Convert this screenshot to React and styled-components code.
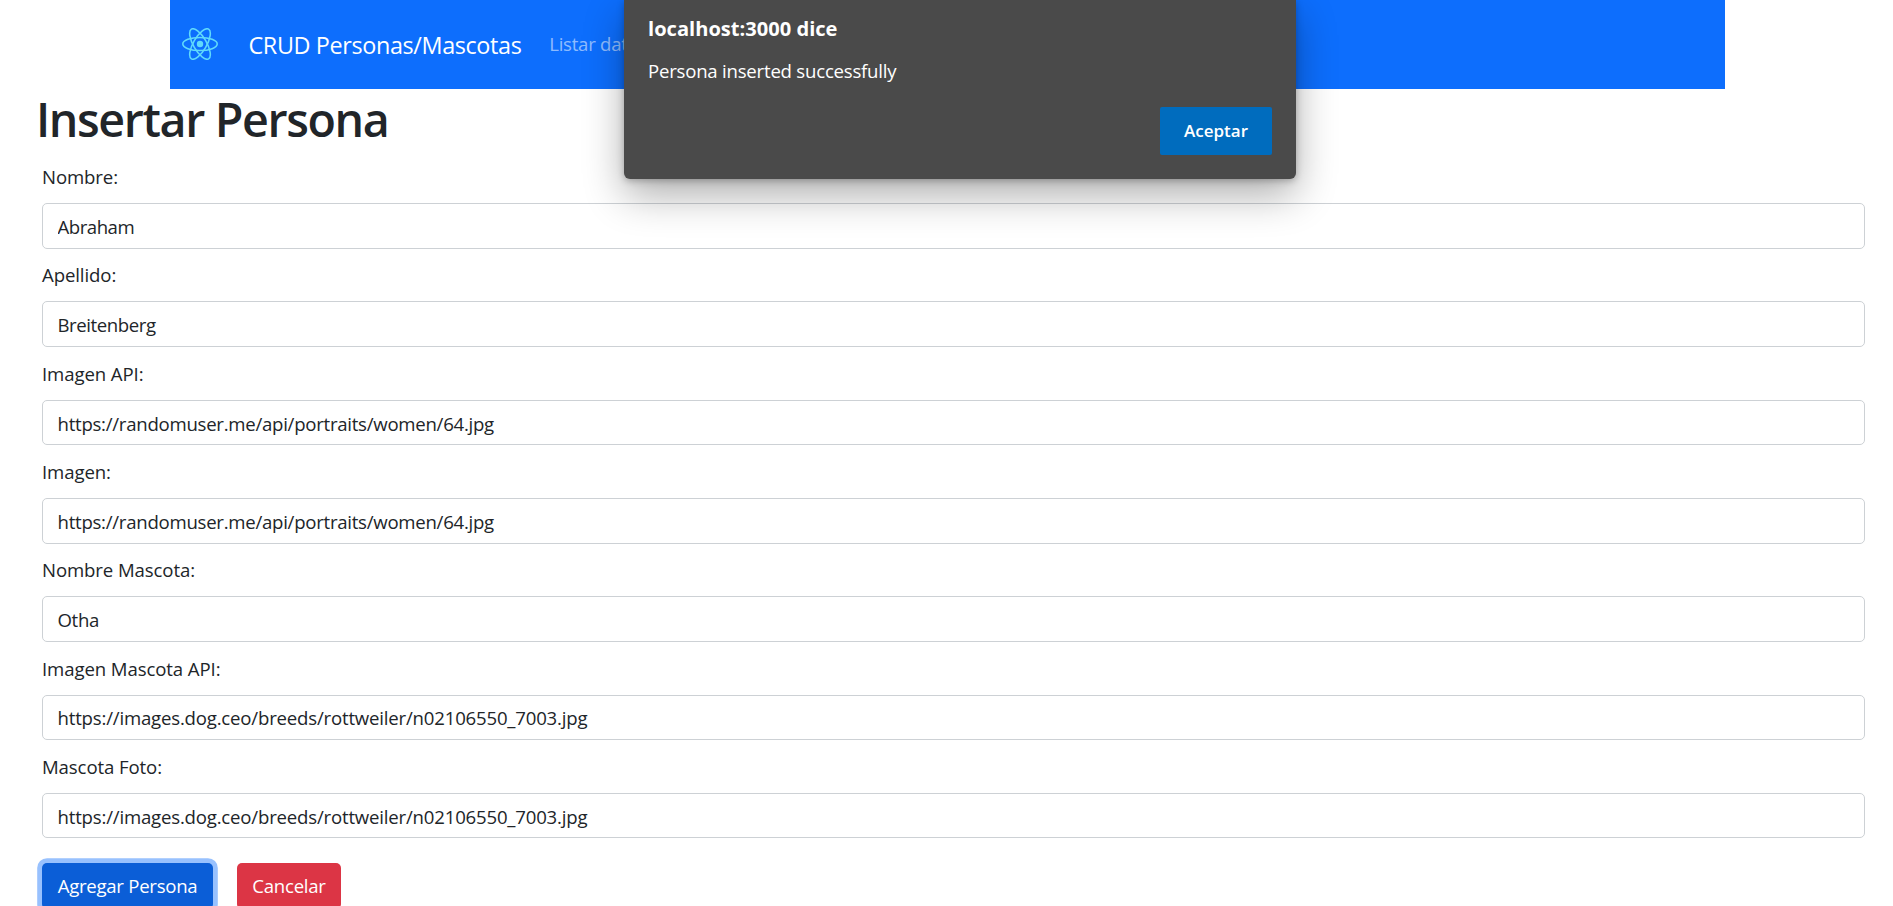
import React from 'react';
import styled, { createGlobalStyle } from 'styled-components';

const GlobalStyle = createGlobalStyle`
  * { box-sizing: border-box; }
  html, body { margin: 0; height: 100%; overflow: hidden; background: #fff; }
  body, button, input { font-family: "Open Sans", "Noto Sans", sans-serif; }
  body { color: #212529; font-size: 18.6px; line-height: 28.8px; }
`;

const Navbar = styled.nav`
  display: flex;
  align-items: center;
  width: 1555px;
  height: 89px;
  margin-left: 170px;
  padding-left: 12px;
  background: #0d6efd;
`;

const Logo = styled.svg`
  flex: none;
  width: 36px;
  height: 32px;
  margin-bottom: 2px;
`;

const Brand = styled.a`
  margin-left: 30.5px;
  padding-top: 2px;
  color: #fff;
  font-size: 23.4px;
  letter-spacing: -0.38px;
  white-space: nowrap;
`;

const NavLink = styled.a`
  margin-left: 27.8px;
  color: rgba(255, 255, 255, 0.55);
  letter-spacing: -0.25px;
  white-space: nowrap;
`;

const Title = styled.h1`
  height: 74.2px;
  margin: 0;
  padding: 1px 0 0 36px;
  font-size: 46.6px;
  line-height: 58px;
  font-weight: 600;
  letter-spacing: -1.38px;
`;

const Form = styled.form`
  padding: 0 28px 0 42px;
`;

const Field = styled.div`
  height: 98.3px;
`;

const Label = styled.label`
  display: block;
  height: 28.8px;
  margin-bottom: 11.2px;
  letter-spacing: -0.1px;
`;

const Input = styled.input`
  display: block;
  width: 100%;
  height: 45.5px;
  padding: 1px 14.5px 0;
  border: 1px solid #cdd1d5;
  border-radius: 5px;
  outline: none;
  background: #fff;
  color: #212529;
  font-size: 18.6px;
  letter-spacing: ${(p) => p.$track}px;
`;

const Actions = styled.div`
  display: flex;
  gap: 24px;
  padding-top: 11.7px;
`;

const Button = styled.button`
  width: ${(p) => p.$width}px;
  height: 45.6px;
  padding: 0;
  border: 0;
  border-radius: 5px;
  background: ${(p) => p.$bg};
  color: #fff;
  font-size: 18.6px;
  letter-spacing: -0.27px;
  box-shadow: ${(p) => (p.$focused ? '0 0 0 4.8px rgba(49, 132, 253, 0.5)' : 'none')};
`;

const Dialog = styled.section`
  position: absolute;
  top: 0;
  left: 624px;
  width: 672px;
  height: 179px;
  padding: 15px 24px;
  border-radius: 0 0 6px 6px;
  background: #4a4a4a;
  color: #fff;
  box-shadow: 0 16px 40px rgba(0, 0, 0, 0.32), 0 2px 7px rgba(0, 0, 0, 0.25);
`;

const DialogTitle = styled.div`
  height: 42px;
  font-size: 20.1px;
  font-weight: 700;
`;

const DialogText = styled.div`
  height: 50px;
  letter-spacing: -0.22px;
`;

const Accept = styled.button`
  display: block;
  width: 112px;
  height: 48px;
  margin-left: auto;
  padding: 0 0 2px;
  border: 0;
  border-radius: 2px;
  background: #006cbe;
  color: #fff;
  font-size: 17px;
  font-weight: 600;
`;

const portrait = 'https://randomuser.me/api/portraits/women/64.jpg';
const dog = 'https://images.dog.ceo/breeds/rottweiler/n02106550_7003.jpg';

const fields = [
  { label: 'Nombre:', value: 'Abraham', track: -0.48 },
  { label: 'Apellido:', value: 'Breitenberg', track: -0.42 },
  { label: 'Imagen API:', value: portrait, track: -0.26 },
  { label: 'Imagen:', value: portrait, track: -0.26 },
  { label: 'Nombre Mascota:', value: 'Otha', track: -0.35 },
  { label: 'Imagen Mascota API:', value: dog, track: -0.19 },
  { label: 'Mascota Foto:', value: dog, track: -0.19 },
];

function ReactLogo() {
  return (
    <Logo viewBox="-11.5 -10.23 23 20.46" fill="none" stroke="#61dafb">
      <circle r="2.05" fill="#61dafb" stroke="none" />
      <ellipse rx="11" ry="4.2" />
      <ellipse rx="11" ry="4.2" transform="rotate(60)" />
      <ellipse rx="11" ry="4.2" transform="rotate(120)" />
    </Logo>
  );
}

export default function App() {
  return (
    <>
      <GlobalStyle />
      <Navbar>
        <ReactLogo />
        <Brand>CRUD Personas/Mascotas</Brand>
        <NavLink>Listar datos</NavLink>
      </Navbar>
      <Title>Insertar Persona</Title>
      <Form>
        {fields.map((f) => (
          <Field key={f.label}>
            <Label>{f.label}</Label>
            <Input type="text" defaultValue={f.value} $track={f.track} />
          </Field>
        ))}
        <Actions>
          <Button type="button" $width={171} $bg="#0b5ed7" $focused>Agregar Persona</Button>
          <Button type="button" $width={104} $bg="#dc3545">Cancelar</Button>
        </Actions>
      </Form>
      <Dialog role="alertdialog">
        <DialogTitle>localhost:3000 dice</DialogTitle>
        <DialogText>Persona inserted successfully</DialogText>
        <Accept type="button">Aceptar</Accept>
      </Dialog>
    </>
  );
}
